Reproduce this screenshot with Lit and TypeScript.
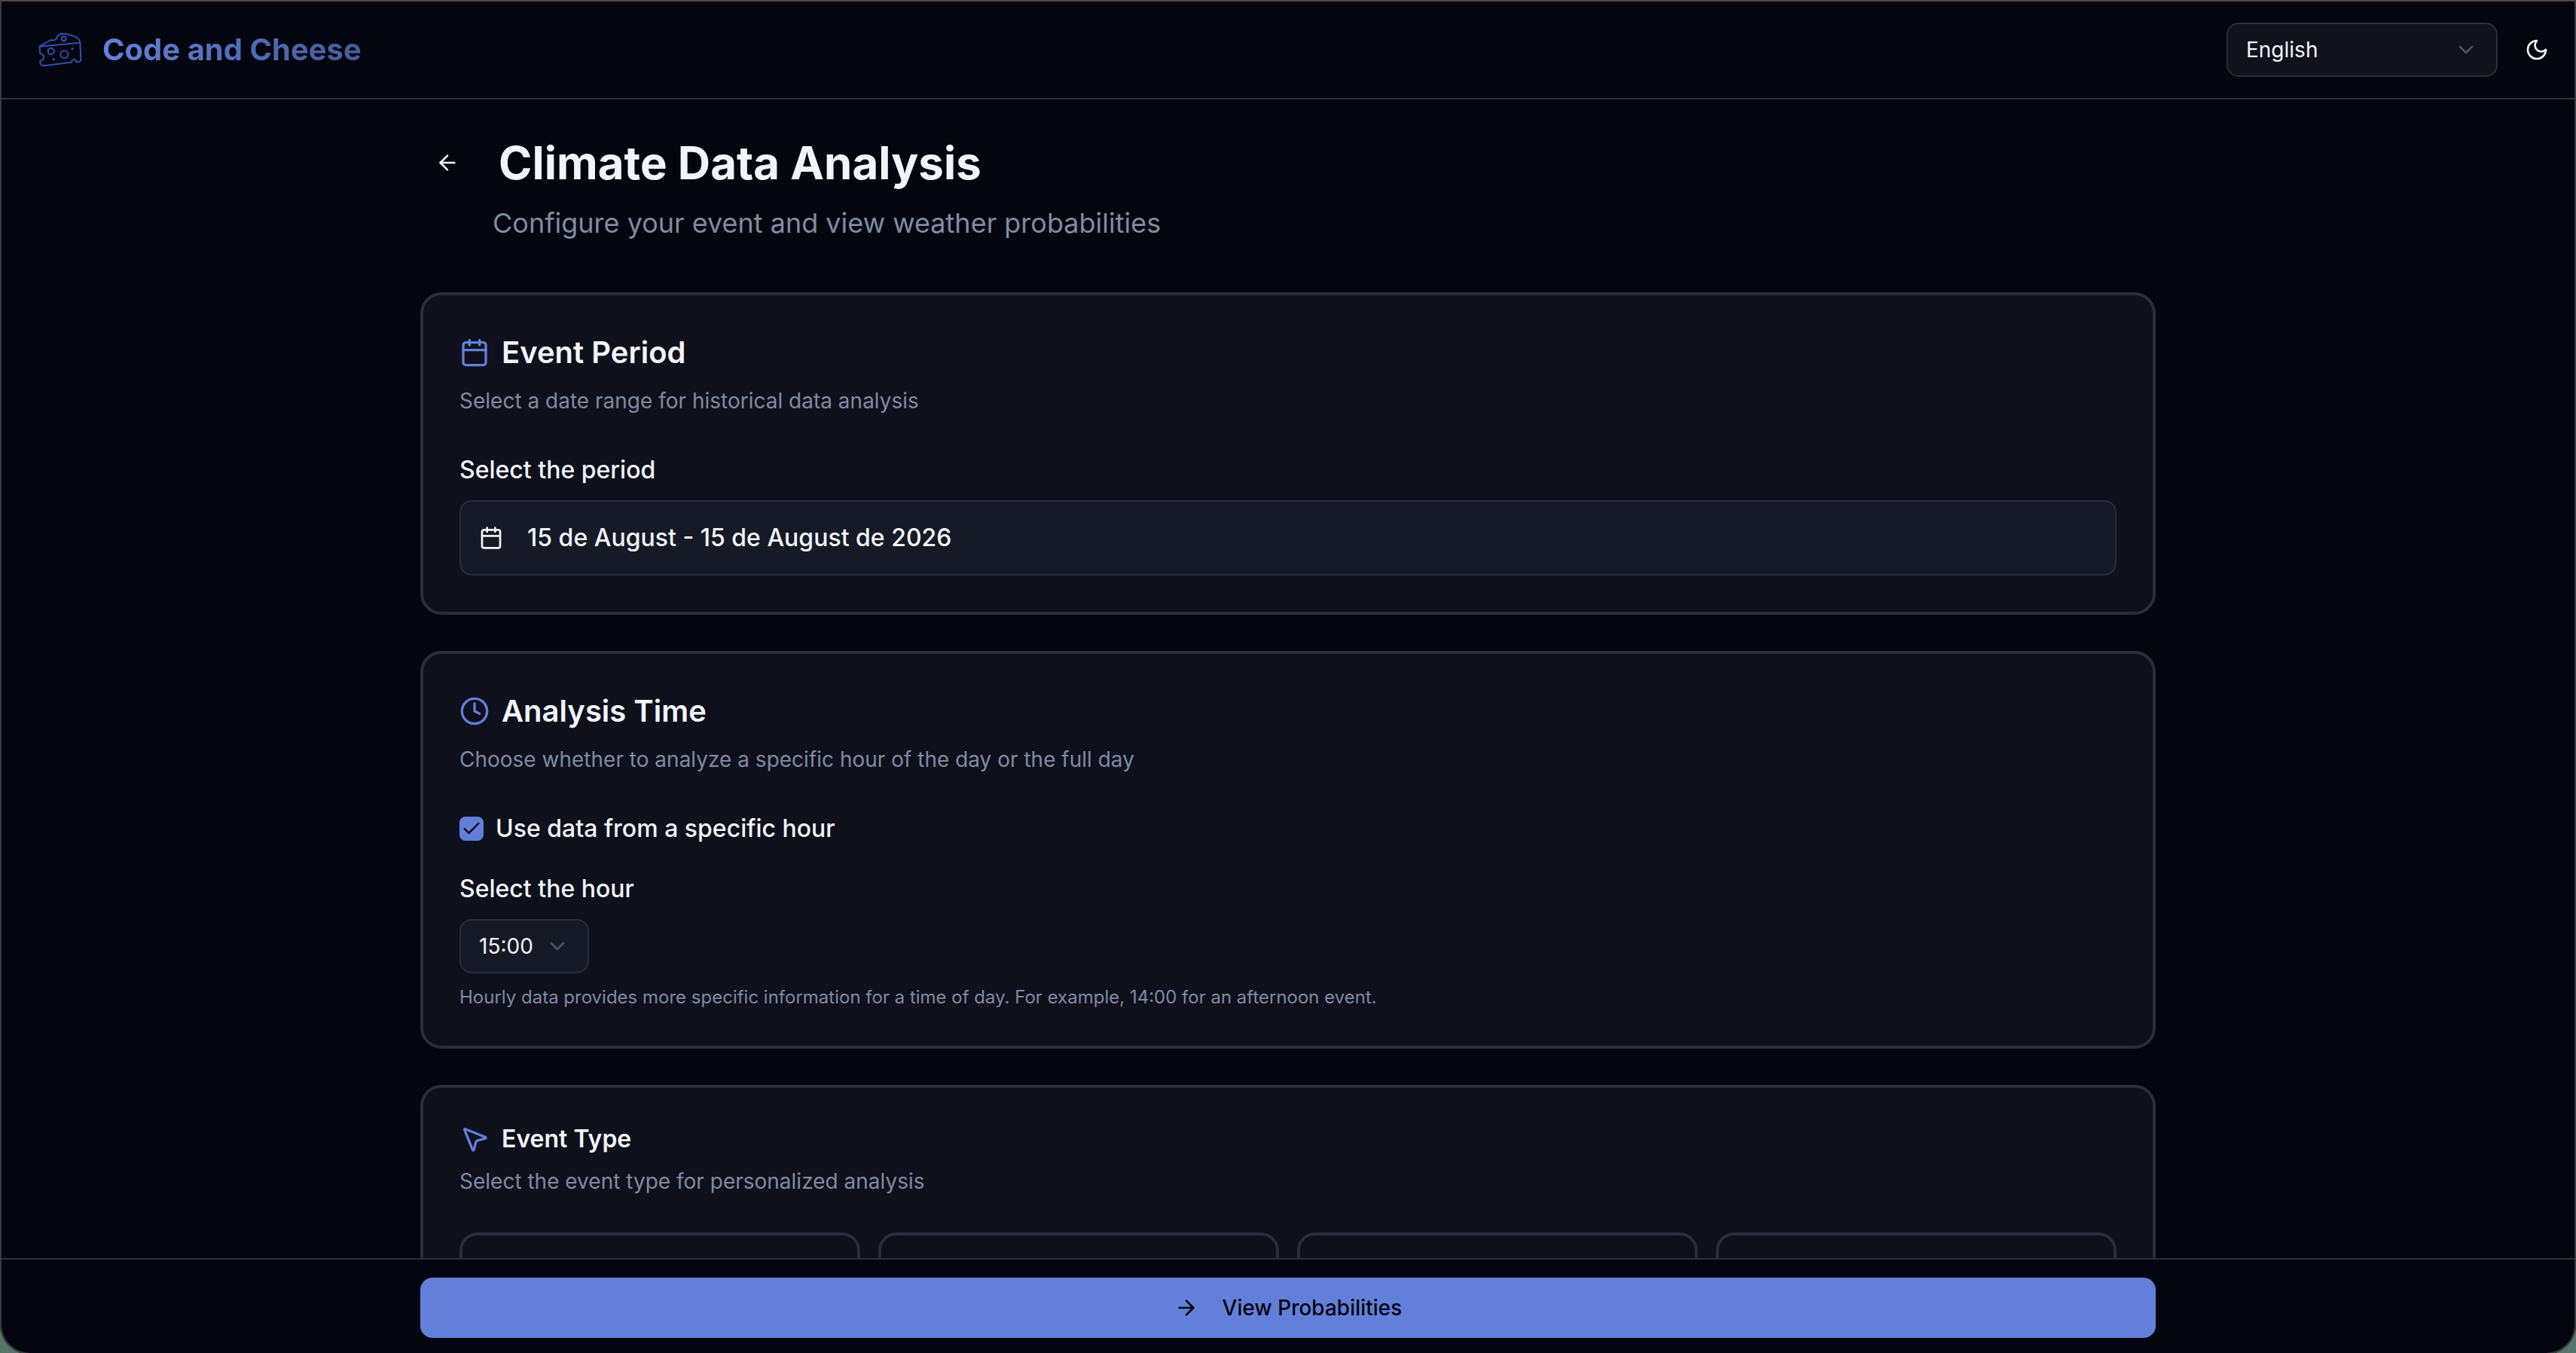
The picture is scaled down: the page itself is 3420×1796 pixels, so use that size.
import { LitElement, html, css, svg } from "lit";
import { customElement, state } from "lit/decorators.js";

const icons = {
  calendar: svg`<path d="M8 2v4"/><path d="M16 2v4"/><rect width="18" height="18" x="3" y="4" rx="2"/><path d="M3 10h18"/>`,
  clock: svg`<circle cx="12" cy="12" r="10"/><path d="M12 6v6l4 2"/>`,
  pointer: svg`<path d="M4.037 4.688a.495.495 0 0 1 .651-.651l16 6.5a.5.5 0 0 1-.063.947l-6.124 1.58a2 2 0 0 0-1.438 1.435l-1.579 6.126a.5.5 0 0 1-.947.063z"/>`,
  chevron: svg`<path d="m6 9 6 6 6-6"/>`,
  moon: svg`<path d="M12 3a6 6 0 0 0 9 9 9 9 0 1 1-9-9Z"/>`,
  back: svg`<path d="m12 19-7-7 7-7"/><path d="M19 12H5"/>`,
  forward: svg`<path d="M5 12h14"/><path d="m12 5 7 7-7 7"/>`,
  check: svg`<path d="M20 6 9 17l-5-5"/>`,
};

const icon = (name: keyof typeof icons, cls = "icon") => html`
  <svg class=${cls} viewBox="0 0 24 24" aria-hidden="true">${icons[name]}</svg>
`;

const logo = html`
  <svg class="logo" viewBox="144 102 192 192" aria-hidden="true">
    <path d="M158 185 L203 159 C214 163 227 159 228 144 Q236 141 243 134 C284 135 316 150 319 168 L322 238 Q320 248 304 247 C302 234 286 234 285 248 L178 261 Q161 264 159 244 C180 236 180 218 159 212 Z" />
    <path d="M158 185 L319 170" />
    <circle cx="254" cy="154" r="9" />
    <circle cx="203" cy="204" r="12" />
    <circle cx="256" cy="217" r="15" />
    <circle class="dot" cx="288" cy="194" r="5" />
    <circle class="dot" cx="214" cy="236" r="5" />
  </svg>
`;

@customElement("app-root")
export class AppRoot extends LitElement {
  @state() private useHour = true;

  static styles = css`
    :host {
      --page: #03060e;
      --card: #0e101b;
      --field: #161a26;
      --line: #2b2d3c;
      --text: #f1f5fb;
      --muted: #7f8ba3;
      --primary: #627fd9;
      display: block;
      color: var(--text);
      font-family: Inter, "Liberation Sans", sans-serif;
    }
    * {
      box-sizing: border-box;
    }
    h1, h2, p {
      margin: 0;
    }
    button, select {
      font: inherit;
      color: inherit;
      margin: 0;
    }
    .window {
      position: relative;
      display: flex;
      flex-direction: column;
      height: 100vh;
      padding-top: 2px;
      overflow: hidden;
      background: var(--page);
    }
    .frame {
      position: absolute;
      inset: 0 0 -2px;
      border: 2px solid #3a3b3f;
      border-top-color: #584844;
      border-radius: 0 0 40px 40px;
      box-shadow: 0 0 0 24px #587468;
      pointer-events: none;
    }
    .icon, .icon-lg, .chevron, .tick, .logo {
      display: block;
      flex: none;
      width: 32px;
      height: 32px;
      fill: none;
      stroke: currentColor;
      stroke-width: 2;
      stroke-linecap: round;
      stroke-linejoin: round;
    }
    .icon-lg {
      width: 40px;
      height: 40px;
      color: var(--primary);
    }
    .logo {
      width: 64px;
      height: 64px;
      stroke: #314eb0;
      stroke-width: 6;
    }
    .dot {
      fill: #314eb0;
      stroke: none;
    }
    .topbar {
      flex: none;
      display: flex;
      align-items: center;
      justify-content: space-between;
      height: 130px;
      padding: 0 16px 0 48px;
      border-bottom: 2px solid var(--line);
    }
    .brand {
      display: flex;
      align-items: center;
      gap: 24px;
      text-decoration: none;
    }
    .brand-name {
      font-size: 40px;
      line-height: 56px;
      font-weight: 700;
      color: transparent;
      background: linear-gradient(to right, #6380dc, #465a9a);
      background-clip: text;
      -webkit-background-clip: text;
    }
    .tools {
      display: flex;
      gap: 16px;
    }
    .icon-button {
      display: grid;
      place-items: center;
      width: 72px;
      height: 72px;
      padding: 0;
      border: 0;
      border-radius: 16px;
      background: transparent;
    }
    .select {
      display: grid;
      align-items: center;
      width: max-content;
    }
    .select select {
      grid-area: 1 / 1;
      appearance: none;
      width: 172px;
      height: 72px;
      padding: 0 24px;
      border: 2px solid var(--line);
      border-radius: 16px;
      background: var(--field);
      font-size: 28px;
      line-height: 40px;
    }
    .select.language select {
      width: 360px;
      background: #10121c;
    }
    .chevron {
      grid-area: 1 / 1;
      justify-self: end;
      margin-right: 26px;
      color: #737e92;
      opacity: 0.6;
      pointer-events: none;
    }
    .content {
      flex: 1;
      min-height: 0;
      overflow: auto;
      scrollbar-width: none;
    }
    .column {
      max-width: 2304px;
      margin: 0 auto;
    }
    .sections {
      display: flex;
      flex-direction: column;
      gap: 48px;
      padding: 48px 0;
    }
    .intro {
      display: grid;
      grid-template-columns: max-content 1fr;
      column-gap: 32px;
      row-gap: 16px;
      align-items: center;
      margin-bottom: 16px;
    }
    h1 {
      font-size: 60px;
      line-height: 72px;
      font-weight: 700;
    }
    .subtitle {
      grid-column: 1 / -1;
      padding-left: 96px;
      font-size: 36px;
      line-height: 56px;
      color: var(--muted);
    }
    .card {
      padding: 48px;
      border: 4px solid var(--line);
      border-radius: 28px;
      background: var(--card);
    }
    .card-title {
      display: flex;
      align-items: center;
      gap: 16px;
      font-size: 40px;
      line-height: 56px;
      font-weight: 600;
    }
    .card-title.small {
      font-size: 32px;
      line-height: 32px;
    }
    .description {
      margin: 16px 0 48px;
      font-size: 28px;
      line-height: 40px;
      color: var(--muted);
    }
    .label {
      display: block;
      width: max-content;
      margin-bottom: 16px;
      font-size: 32px;
      line-height: 48px;
      font-weight: 500;
    }
    .period {
      display: flex;
      align-items: center;
      gap: 32px;
      width: 100%;
      height: 100px;
      padding: 0 24px;
      border: 2px solid var(--line);
      border-radius: 16px;
      background: var(--field);
      font-size: 32px;
      line-height: 48px;
      font-weight: 500;
    }
    .check-row {
      display: flex;
      align-items: center;
      gap: 16px;
      margin-bottom: 32px;
    }
    .check-row .label {
      margin: 0;
    }
    .check {
      display: grid;
    }
    .check input {
      grid-area: 1 / 1;
      appearance: none;
      width: 32px;
      height: 32px;
      margin: 0;
      border: 2px solid var(--primary);
      border-radius: 8px;
    }
    .check input:checked {
      background: var(--primary);
    }
    .tick {
      grid-area: 1 / 1;
      place-self: center;
      width: 28px;
      height: 28px;
      color: var(--page);
      pointer-events: none;
    }
    .hint {
      margin-top: 16px;
      font-size: 24px;
      line-height: 32px;
      color: var(--muted);
    }
    .types {
      display: grid;
      grid-template-columns: repeat(4, 1fr);
      gap: 24px;
    }
    .type {
      height: 220px;
      border: 4px solid var(--line);
      border-radius: 24px;
      background: var(--card);
    }
    .actions {
      flex: none;
      padding: 24px 0 20px;
      border-top: 2px solid var(--line);
    }
    .primary {
      display: flex;
      align-items: center;
      justify-content: center;
      gap: 32px;
      width: 100%;
      height: 80px;
      border: 0;
      border-radius: 16px;
      background: var(--primary);
      color: var(--page);
      font-size: 28px;
      line-height: 40px;
      font-weight: 500;
    }
  `;

  render() {
    return html`
      <div class="window">
        <header class="topbar">
          <a class="brand" href="#">${logo}<span class="brand-name">Code and Cheese</span></a>
          <div class="tools">
            <div class="select language">
              <select aria-label="Language"><option>English</option></select>
              ${icon("chevron", "chevron")}
            </div>
            <button class="icon-button" aria-label="Toggle theme">${icon("moon")}</button>
          </div>
        </header>

        <main class="content">
          <div class="column sections">
            <div class="intro">
              <button class="icon-button" aria-label="Back">${icon("back")}</button>
              <h1>Climate Data Analysis</h1>
              <p class="subtitle">Configure your event and view weather probabilities</p>
            </div>

            <section class="card">
              <h2 class="card-title">${icon("calendar", "icon-lg")}Event Period</h2>
              <p class="description">Select a date range for historical data analysis</p>
              <label class="label" for="period">Select the period</label>
              <button class="period" id="period">
                ${icon("calendar")}<span>15 de August - 15 de August de 2026</span>
              </button>
            </section>

            <section class="card">
              <h2 class="card-title">${icon("clock", "icon-lg")}Analysis Time</h2>
              <p class="description">Choose whether to analyze a specific hour of the day or the full day</p>
              <div class="check-row">
                <span class="check">
                  <input
                    type="checkbox"
                    id="use-hour"
                    .checked=${this.useHour}
                    @change=${(e: Event) => (this.useHour = (e.target as HTMLInputElement).checked)}
                  />
                  ${this.useHour ? icon("check", "tick") : ""}
                </span>
                <label class="label" for="use-hour">Use data from a specific hour</label>
              </div>
              <label class="label" for="hour">Select the hour</label>
              <div class="select">
                <select id="hour"><option>15:00</option></select>
                ${icon("chevron", "chevron")}
              </div>
              <p class="hint">
                Hourly data provides more specific information for a time of day. For example, 14:00 for an afternoon event.
              </p>
            </section>

            <section class="card">
              <h2 class="card-title small">${icon("pointer", "icon-lg")}Event Type</h2>
              <p class="description">Select the event type for personalized analysis</p>
              <div class="types">
                ${[0, 1, 2, 3].map(() => html`<div class="type"></div>`)}
              </div>
            </section>
          </div>
        </main>

        <footer class="actions">
          <div class="column">
            <button class="primary">${icon("forward")}<span>View Probabilities</span></button>
          </div>
        </footer>
        <div class="frame"></div>
      </div>
    `;
  }
}
